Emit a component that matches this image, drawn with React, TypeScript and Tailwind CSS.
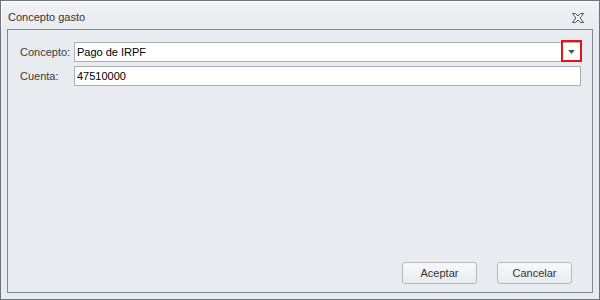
import { ReactNode } from "react";

const font = { fontFamily: "'Liberation Sans', Arial, sans-serif" };

const CloseIcon = () => (
  <svg width="12" height="10" viewBox="0 0 12 10">
    <path
      d="M0.5 0.5 H3.5 L6 3 L8.5 0.5 H11.5 L8 5 L11.5 9.5 H8.5 L6 7 L3.5 9.5 H0.5 L4 5 Z"
      fill="#fbfbfc"
      stroke="#4a4f55"
      strokeWidth="1"
      strokeLinejoin="round"
    />
  </svg>
);

const Field = ({ label, children }: { label: string; children: ReactNode }) => (
  <div className="flex items-center h-5">
    <span className="w-[54px] text-[11px] text-[#3b3b3b]">{label}</span>
    {children}
  </div>
);

const DialogButton = ({ children }: { children: ReactNode }) => (
  <button className="h-[22px] w-[75px] rounded-[3px] border border-[#b4b8bd] bg-gradient-to-b from-[#f7f8f9] to-[#e9ecef] text-[11px] text-[#333]">
    {children}
  </button>
);

export default function App() {
  return (
    <div
      className="w-[600px] h-[300px] border border-[#6e747b] bg-[#e8ebef] flex flex-col"
      style={font}
    >
      <div className="h-[28px] flex items-center justify-between pl-[6px] pr-[15px] bg-gradient-to-b from-[#f1f2f4] to-[#e8ebef] border-t border-l border-white">
        <span className="text-[11px] text-[#333] pt-[4px]">Concepto gasto</span>
        <span className="pt-[4px]">
          <CloseIcon />
        </span>
      </div>
      <div className="flex-1 pl-[6px] pr-[6px] pb-[6px] flex">
        <div className="flex-1 border border-[#868a90] flex flex-col pt-[12px] pl-[12px] pr-[11px] pb-[8px]">
          <div className="flex flex-col gap-1">
            <Field label="Concepto:">
              <div className="relative flex-1 h-5 bg-white border border-[#abafb5] flex items-center">
                <span className="flex-1 pl-[2px] text-[11px] text-black">Pago de IRPF</span>
                <div className="w-[17px] h-full flex items-center justify-center">
                  <svg width="7" height="4" viewBox="0 0 7 4">
                    <path d="M0 0 H7 L3.5 4 Z" fill="#55595e" />
                  </svg>
                </div>
                <div className="absolute right-[-2px] top-[-3px] w-[21px] h-[22px] border-2 border-[#ee1111]" />
              </div>
            </Field>
            <Field label="Cuenta:">
              <div className="flex-1 h-5 bg-white border border-[#abafb5] flex items-center">
                <span className="pl-[2px] text-[11px] text-black">47510000</span>
              </div>
            </Field>
          </div>
          <div className="flex-1" />
          <div className="flex justify-end gap-5 pr-[9px]">
            <DialogButton>Aceptar</DialogButton>
            <DialogButton>Cancelar</DialogButton>
          </div>
        </div>
      </div>
    </div>
  );
}
